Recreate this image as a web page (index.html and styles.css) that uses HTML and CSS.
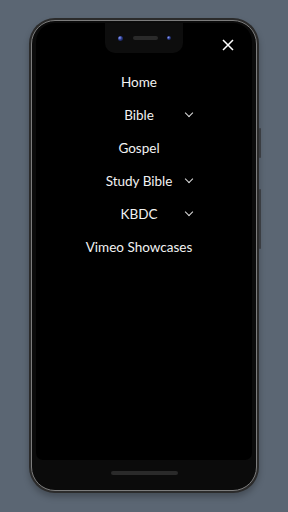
FILE: index.html
```html
<!DOCTYPE html>
<html lang="en">
<head>
    <meta charset="UTF-8">
    <meta name="viewport" content="width=device-width, initial-scale=1.0">
    <title>Menu</title>
    <link rel="stylesheet" href="styles.css">
</head>
<body>
    <div class="phone">
        <span class="side-btn power"></span>
        <span class="side-btn volume"></span>
        <div class="bezel">
            <div class="screen">
                <div class="notch">
                    <span class="cam"></span>
                    <span class="speaker"></span>
                    <span class="cam small"></span>
                </div>
                <!-- close button sits over the menu -->
                <button class="close" aria-label="Close">
                    <svg width="12" height="12" viewBox="0 0 12 12">
                        <path d="M1 1 L11 11 M11 1 L1 11" stroke="#fff" stroke-width="1.5" fill="none"/>
                    </svg>
                </button>
                <nav class="menu">
                    <a class="item"><span>Home</span></a>
                    <a class="item"><span>Bible</span><span class="chev"></span></a>
                    <a class="item"><span>Gospel</span></a>
                    <a class="item"><span>Study Bible</span><span class="chev"></span></a>
                    <a class="item"><span>KBDC</span><span class="chev"></span></a>
                    <a class="item"><span>Vimeo Showcases</span></a>
                </nav>
            </div>
            <div class="navbar">
                <span class="pill"></span>
            </div>
        </div>
    </div>
</body>
</html>
```

FILE: styles.css
```css
body {
    margin: 0;
    background-color: #5b6673;
    font-family: Lato, "Open Sans", sans-serif;
    height: 512px;
    overflow: hidden;
}
.phone {
    position: relative;
    width: 230px;
    height: 475px;
    margin: 18px auto 0;
    box-sizing: border-box;
    padding: 2px;
    background-color: #2b2b2b;
    border-radius: 26px;
    box-shadow: 0 4px 6px rgba(0, 0, 0, 0.25);
}
.side-btn {
    position: absolute;
    right: -2px;
    width: 2px;
    background-color: #3a3d42;
    border-radius: 1px;
}
.power {
    top: 110px;
    height: 30px;
}
.volume {
    top: 171px;
    height: 60px;
}
.bezel {
    height: 100%;
    box-sizing: border-box;
    border: 1px solid #7c7c7c;
    border-radius: 24px;
    background-color: #0b0b0b;
    padding: 2px 4px 4px;
    display: flex;
    flex-direction: column;
}
.screen {
    position: relative;
    flex: 1;
    background-color: #000;
    border-radius: 19px 19px 7px 7px;
}
.notch {
    width: 78px;
    height: 30px;
    margin: 0 auto;
    background-color: #0d0d0d;
    border-radius: 0 0 10px 10px;
    display: flex;
    align-items: center;
    justify-content: space-between;
    padding: 0 12px 0 13px;
    box-sizing: border-box;
}
.cam {
    width: 5px;
    height: 5px;
    border-radius: 50%;
    background: radial-gradient(circle at 35% 35%, #8fa0ff 0, #2a3a8a 45%, #0b0f22 100%);
}
.cam.small {
    width: 4px;
    height: 4px;
}
.speaker {
    width: 25px;
    height: 4px;
    border-radius: 2px;
    background-color: #2a2a2a;
}
.close {
    position: absolute;
    top: 16px;
    right: 18px;
    background: none;
    border: none;
    padding: 0;
    line-height: 0;
}
.menu {
    display: flex;
    flex-direction: column;
    padding-top: 12px;
    padding-right: 10px;
}
.item {
    display: grid;
    grid-template-columns: 1fr;
    justify-items: center;
    height: 33px;
    align-items: center;
    color: #f2f2f2;
    font-size: 13.5px;
}
.item > span {
    grid-area: 1 / 1;
}
.chev {
    justify-self: start;
    margin-left: 150px;
    width: 5px;
    height: 5px;
    border-right: 1.3px solid #ddd;
    border-bottom: 1.3px solid #ddd;
    transform: translateY(-2px) rotate(45deg);
}
.navbar {
    height: 26px;
    display: flex;
    align-items: center;
    justify-content: center;
}
.pill {
    width: 67px;
    height: 4px;
    border-radius: 2px;
    background-color: #2a2a2a;
}
```
